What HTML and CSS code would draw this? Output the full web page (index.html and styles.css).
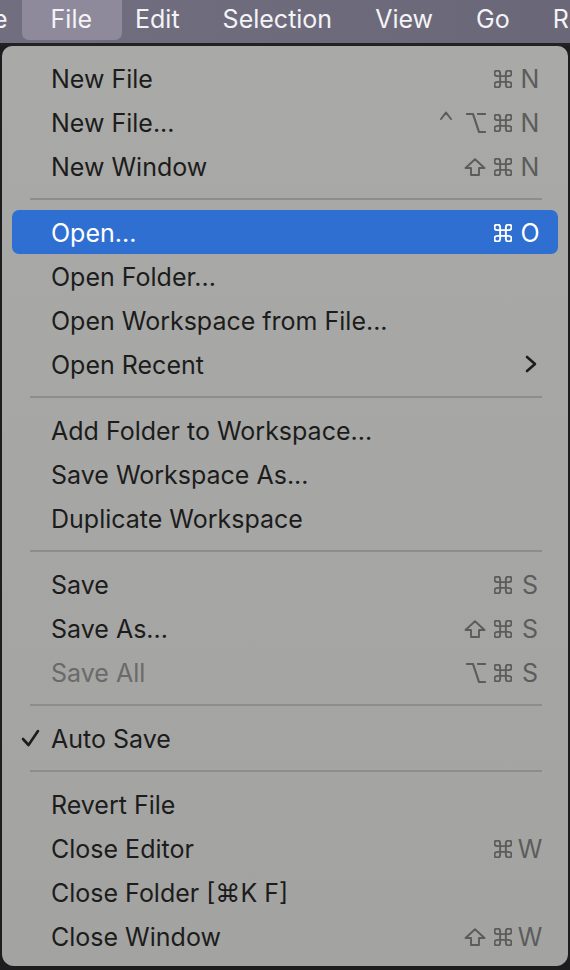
FILE: index.html
```html
<!DOCTYPE html>
<html lang="en">
<head>
<meta charset="utf-8">
<title>File menu</title>
<link rel="stylesheet" href="styles.css">
</head>
<body>
<header class="menubar">
  <span class="bar-item clipped">e</span>
  <span class="bar-item active">File</span>
  <span class="bar-item">Edit</span>
  <span class="bar-item">Selection</span>
  <span class="bar-item">View</span>
  <span class="bar-item">Go</span>
  <span class="bar-item">Run</span>
</header>

<div class="menu">
  <div class="row"><span class="check"></span><span class="label">New File</span>
    <span class="sc"><span class="mods"><svg class="m-cmd" viewBox="2.5 2.5 19 19"><path d="M15 6v12a3 3 0 1 0 3-3H6a3 3 0 1 0 3 3V6a3 3 0 1 0-3 3h12a3 3 0 1 0-3-3"/></svg></span><span class="key">N</span></span></div>
  <div class="row"><span class="check"></span><span class="label">New File...</span>
    <span class="sc"><span class="mods"><svg class="m-ctrl" viewBox="0 0 12 9"><polyline points="1,8 6,1.5 11,8"/></svg><svg class="m-opt" viewBox="2 2 20 20"><path d="M3 3h6l6 18h6"/><path d="M14 3h7"/></svg><svg class="m-cmd" viewBox="2.5 2.5 19 19"><path d="M15 6v12a3 3 0 1 0 3-3H6a3 3 0 1 0 3 3V6a3 3 0 1 0-3 3h12a3 3 0 1 0-3-3"/></svg></span><span class="key">N</span></span></div>
  <div class="row"><span class="check"></span><span class="label">New Window</span>
    <span class="sc"><span class="mods"><svg class="m-shift" viewBox="0 0 22 18"><path d="M7 17V10H1.5L11 1.2 20.5 10H15V17Z"/></svg><svg class="m-cmd" viewBox="2.5 2.5 19 19"><path d="M15 6v12a3 3 0 1 0 3-3H6a3 3 0 1 0 3 3V6a3 3 0 1 0-3 3h12a3 3 0 1 0-3-3"/></svg></span><span class="key">N</span></span></div>

  <div class="sep"></div>

  <div class="row selected"><span class="check"></span><span class="label">Open...</span>
    <span class="sc"><span class="mods"><svg class="m-cmd" viewBox="2.5 2.5 19 19"><path d="M15 6v12a3 3 0 1 0 3-3H6a3 3 0 1 0 3 3V6a3 3 0 1 0-3 3h12a3 3 0 1 0-3-3"/></svg></span><span class="key">O</span></span></div>
  <div class="row"><span class="check"></span><span class="label">Open Folder...</span></div>
  <div class="row"><span class="check"></span><span class="label">Open Workspace from File...</span></div>
  <div class="row"><span class="check"></span><span class="label">Open Recent</span>
    <svg class="chev" viewBox="0 0 12 18"><polyline points="2,2 10,9 2,16"/></svg></div>

  <div class="sep"></div>

  <div class="row"><span class="check"></span><span class="label">Add Folder to Workspace...</span></div>
  <div class="row"><span class="check"></span><span class="label">Save Workspace As...</span></div>
  <div class="row"><span class="check"></span><span class="label">Duplicate Workspace</span></div>

  <div class="sep"></div>

  <div class="row"><span class="check"></span><span class="label">Save</span>
    <span class="sc"><span class="mods"><svg class="m-cmd" viewBox="2.5 2.5 19 19"><path d="M15 6v12a3 3 0 1 0 3-3H6a3 3 0 1 0 3 3V6a3 3 0 1 0-3 3h12a3 3 0 1 0-3-3"/></svg></span><span class="key">S</span></span></div>
  <div class="row"><span class="check"></span><span class="label">Save As...</span>
    <span class="sc"><span class="mods"><svg class="m-shift" viewBox="0 0 22 18"><path d="M7 17V10H1.5L11 1.2 20.5 10H15V17Z"/></svg><svg class="m-cmd" viewBox="2.5 2.5 19 19"><path d="M15 6v12a3 3 0 1 0 3-3H6a3 3 0 1 0 3 3V6a3 3 0 1 0-3 3h12a3 3 0 1 0-3-3"/></svg></span><span class="key">S</span></span></div>
  <div class="row disabled"><span class="check"></span><span class="label">Save All</span>
    <span class="sc"><span class="mods"><svg class="m-opt" viewBox="2 2 20 20"><path d="M3 3h6l6 18h6"/><path d="M14 3h7"/></svg><svg class="m-cmd" viewBox="2.5 2.5 19 19"><path d="M15 6v12a3 3 0 1 0 3-3H6a3 3 0 1 0 3 3V6a3 3 0 1 0-3 3h12a3 3 0 1 0-3-3"/></svg></span><span class="key">S</span></span></div>

  <div class="sep"></div>

  <div class="row"><span class="check"><svg class="tick" viewBox="0 0 19 18"><polyline points="2,10 7.5,16 17,2"/></svg></span><span class="label">Auto Save</span></div>

  <div class="sep"></div>

  <div class="row"><span class="check"></span><span class="label">Revert File</span></div>
  <div class="row"><span class="check"></span><span class="label">Close Editor</span>
    <span class="sc"><span class="mods"><svg class="m-cmd" viewBox="2.5 2.5 19 19"><path d="M15 6v12a3 3 0 1 0 3-3H6a3 3 0 1 0 3 3V6a3 3 0 1 0-3 3h12a3 3 0 1 0-3-3"/></svg></span><span class="key">W</span></span></div>
  <div class="row"><span class="check"></span><span class="label">Close Folder [⌘K F]</span></div>
  <div class="row"><span class="check"></span><span class="label">Close Window</span>
    <span class="sc"><span class="mods"><svg class="m-shift" viewBox="0 0 22 18"><path d="M7 17V10H1.5L11 1.2 20.5 10H15V17Z"/></svg><svg class="m-cmd" viewBox="2.5 2.5 19 19"><path d="M15 6v12a3 3 0 1 0 3-3H6a3 3 0 1 0 3 3V6a3 3 0 1 0-3 3h12a3 3 0 1 0-3-3"/></svg></span><span class="key">W</span></span></div>
</div>
</body>
</html>
```

FILE: styles.css
```css
* { box-sizing: border-box; }

html, body {
  margin: 0;
  padding: 0;
  background: #1d1d1f;
  width: 570px;
  height: 970px;
  overflow: hidden;
  font-family: Inter, "DejaVu Sans", sans-serif;
}

.menubar {
  height: 46px;
  background: linear-gradient(90deg, #716e80 0%, #6a6779 100%);
  border-bottom: 3px solid #222224;
  display: flex;
  align-items: center;
  gap: 43px;
  padding-bottom: 5px;
  overflow: hidden;
  white-space: nowrap;
}

.bar-item {
  position: relative;
  color: #f4f3f6;
  font-size: 25px;
  line-height: 30px;
  z-index: 0;
}

.bar-item.clipped { margin-left: -7px; }

.bar-item.active::before {
  content: "";
  position: absolute;
  left: -29px;
  right: -30px;
  top: -12px;
  bottom: -6px;
  background: #8e8a9c;
  border-radius: 7px;
  z-index: -1;
}

.menu {
  margin: 0 2px;
  width: 566px;
  height: 920px;
  background: linear-gradient(180deg, #a9aaa7 0%, #a6a7a4 50%, #a3a3a1 100%);
  border-radius: 10px 10px 12px 12px;
  padding: 10px 10px 8px;
}

.row {
  height: 44px;
  display: flex;
  align-items: center;
  padding: 0 15px 0 9px;
  border-radius: 7px;
  color: #1c1c1c;
  font-size: 25px;
}

.row.selected {
  background: #2f6fd2;
  color: #ffffff;
}

.row.disabled .label { color: #6a6a6a; }

.check {
  width: 30px;
  flex: none;
  display: flex;
  align-items: center;
}

.label {
  flex: 1;
  white-space: nowrap;
  padding-top: 2px;
}

.sc {
  display: flex;
  align-items: center;
  color: #5c5c5c;
  padding-top: 2px;
}

.row.selected .sc { color: #ffffff; }

.mods {
  display: flex;
  align-items: center;
  gap: 8px;
}

.mods svg {
  fill: none;
  stroke: currentColor;
  stroke-width: 2;
  stroke-linecap: round;
  stroke-linejoin: round;
  display: block;
}

.m-cmd { width: 18px; height: 18px; }
.m-opt { width: 20px; height: 20px; stroke-width: 2.2 !important; }
.m-shift { width: 22px; height: 18px; stroke-width: 1.9 !important; }
.m-ctrl { width: 12px; height: 9px; margin-right: 6px; align-self: flex-start; margin-top: -2px; }

.key {
  width: 26px;
  margin-left: 5px;
  text-align: center;
  line-height: 1;
}

.sep {
  height: 2px;
  background: #8d8d8b;
  margin: 10px 16px 10px 18px;
}

.tick {
  width: 19px;
  height: 18px;
  fill: none;
  stroke: #1c1c1c;
  stroke-width: 2.6;
  stroke-linecap: round;
  stroke-linejoin: round;
}

.chev {
  width: 12px;
  height: 18px;
  margin-right: 6px;
  fill: none;
  stroke: #1c1c1c;
  stroke-width: 2.6;
  stroke-linecap: round;
  stroke-linejoin: round;
}
```
